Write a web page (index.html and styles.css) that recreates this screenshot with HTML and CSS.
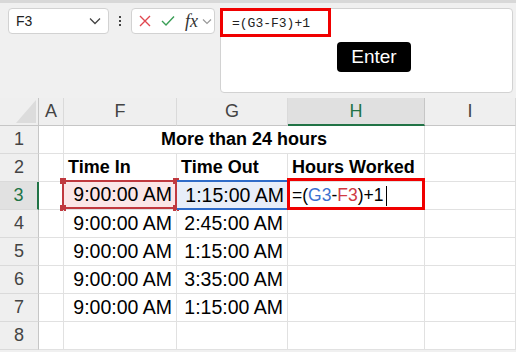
FILE: index.html
```html
<!DOCTYPE html>
<html lang="en">
<head>
  <meta charset="UTF-8" />
  <title>Hours Worked</title>
  <link rel="stylesheet" href="styles.css">
</head>
<body>
  <div class="toolbar">
    <div class="namebox">
      <span>F3</span>
      <svg width="12" height="8" viewBox="0 0 12 8"><path d="M1 1.5 L6 6.5 L11 1.5" fill="none" stroke="#444" stroke-width="1.3"/></svg>
    </div>
    <div class="dots"><i></i><i></i><i></i></div>
    <div class="buttons">
      <svg class="btn-x" width="12" height="12" viewBox="0 0 12 12"><path d="M1 1 L11 11 M11 1 L1 11" stroke="#e0474f" stroke-width="1.4"/></svg>
      <svg class="btn-ok" width="14" height="12" viewBox="0 0 14 12"><path d="M1 6 L5 10 L13 1.5" fill="none" stroke="#3a9e56" stroke-width="1.4"/></svg>
      <span class="fx">fx</span>
      <svg width="10" height="7" viewBox="0 0 10 7"><path d="M1 1.5 L5 5.5 L9 1.5" fill="none" stroke="#999" stroke-width="1.2"/></svg>
    </div>
    <div class="formulabar">
      <div class="formula">=(G3-F3)+1</div>
      <div class="enter">Enter</div>
    </div>
  </div>

  <div class="sheet">
    <div class="hd corner"><div class="tri"></div></div>
    <div class="hd">A</div>
    <div class="hd">F</div>
    <div class="hd">G</div>
    <div class="hd active">H</div>
    <div class="hd">I</div>

    <div class="rn">1</div>
    <div class="c"></div>
    <div class="c title">More than 24 hours</div>
    <div class="c"></div>

    <div class="rn">2</div>
    <div class="c"></div>
    <div class="c bold">Time In</div>
    <div class="c bold">Time Out</div>
    <div class="c bold">Hours Worked</div>
    <div class="c"></div>

    <div class="rn cur">3</div>
    <div class="c"></div>
    <div class="c num ref-red">9:00:00 AM<i class="h tl"></i><i class="h tr"></i><i class="h bl"></i><i class="h br"></i></div>
    <div class="c num ref-blue">1:15:00 AM</div>
    <div class="c edit">=(<span class="blue">G3</span>-<span class="red">F3</span>)+1<span class="caret"></span><div class="hl"></div></div>
    <div class="c"></div>

    <div class="rn">4</div>
    <div class="c"></div>
    <div class="c num">9:00:00 AM</div>
    <div class="c num">2:45:00 AM</div>
    <div class="c"></div>
    <div class="c"></div>

    <div class="rn">5</div>
    <div class="c"></div>
    <div class="c num">9:00:00 AM</div>
    <div class="c num">1:15:00 AM</div>
    <div class="c"></div>
    <div class="c"></div>

    <div class="rn">6</div>
    <div class="c"></div>
    <div class="c num">9:00:00 AM</div>
    <div class="c num">3:35:00 AM</div>
    <div class="c"></div>
    <div class="c"></div>

    <div class="rn">7</div>
    <div class="c"></div>
    <div class="c num">9:00:00 AM</div>
    <div class="c num">1:15:00 AM</div>
    <div class="c"></div>
    <div class="c"></div>

    <div class="rn">8</div>
    <div class="c"></div>
    <div class="c"></div>
    <div class="c"></div>
    <div class="c"></div>
    <div class="c"></div>
  </div>
</body>
</html>
```

FILE: styles.css
```css
body {
  margin: 0;
  background-color: #f0f0f0;
  font-family: "Liberation Sans", Arial, sans-serif;
  color: #000;
  overflow: hidden;
}
.toolbar {
  display: flex;
  align-items: flex-start;
  height: 90px;
  padding: 5px 3px 0 8px;
  border-top: 3px solid #d8d8d8;
}
.namebox {
  width: 101px;
  height: 26px;
  box-sizing: border-box;
  background: #fff;
  border: 1px solid #d2d2d2;
  border-radius: 4px;
  display: flex;
  align-items: center;
  justify-content: space-between;
  padding: 0 7px;
  font-size: 14px;
  color: #222;
}
.dots {
  width: 22px;
  height: 26px;
  display: flex;
  flex-direction: column;
  align-items: center;
  justify-content: center;
  gap: 2px;
}
.dots i {
  width: 2px;
  height: 2px;
  background: #444;
}
.buttons {
  width: 84px;
  height: 26px;
  box-sizing: border-box;
  background: #fff;
  border: 1px solid #d2d2d2;
  border-radius: 4px;
  display: flex;
  align-items: center;
  padding-left: 7px;
}
.btn-ok {
  margin-left: 10px;
}
.fx {
  font-family: "Liberation Serif", serif;
  font-style: italic;
  font-size: 18px;
  color: #333;
  margin-left: 10px;
  margin-right: 4px;
}
.formulabar {
  flex: 1;
  height: 85px;
  margin-left: 5px;
  background: #fff;
  border: 1px solid #d2d2d2;
  border-radius: 4px;
  box-sizing: border-box;
}
.formula {
  width: 111px;
  height: 29px;
  box-sizing: border-box;
  border: 3px solid #f00000;
  margin: -1px 0 0 -1px;
  font-family: "Liberation Mono", monospace;
  font-size: 13px;
  padding: 5px 0 0 9px;
  color: #222;
}
.enter {
  width: 74px;
  height: 30px;
  margin: 5px 0 0 116px;
  background: #000;
  color: #fff;
  border-radius: 4px;
  font-size: 19px;
  line-height: 30px;
  text-align: center;
}
.sheet {
  display: grid;
  grid-template-columns: 39px 25px 113px 111px 137px 1fr;
  grid-auto-rows: 28px;
  background: #fff;
}
.hd {
  background: #efefef;
  border-bottom: 1px solid #c6c6c6;
  border-right: 1px solid #dadada;
  display: flex;
  align-items: center;
  justify-content: center;
  font-size: 18px;
  color: #444;
  box-sizing: border-box;
}
.hd.active {
  background: #e0e0e0;
  color: #217346;
  border-bottom: 2px solid #217346;
  border-right-color: #c6c6c6;
}
.corner {
  border-right-color: #c6c6c6;
  position: relative;
}
.tri {
  position: absolute;
  left: 16px;
  top: 2px;
  width: 20px;
  height: 23px;
  background: #dcdcdc;
  clip-path: polygon(100% 0, 100% 100%, 0 100%);
}
.rn {
  grid-column: 1;
  background: #efefef;
  border-right: 1px solid #c6c6c6;
  border-bottom: 1px solid #dadada;
  display: flex;
  align-items: center;
  justify-content: center;
  font-size: 18px;
  color: #444;
  box-sizing: border-box;
}
.rn.cur {
  background: #e1e1e1;
  color: #217346;
  border-right: 2px solid #217346;
}
.c {
  border-right: 1px solid #e1e1e1;
  border-bottom: 1px solid #e1e1e1;
  box-sizing: border-box;
  display: flex;
  align-items: center;
  font-size: 19.5px;
  padding: 0 4px;
  position: relative;
  white-space: nowrap;
}
.title {
  grid-column: 3 / 6;
  justify-content: center;
  font-weight: bold;
  font-size: 18px;
}
.bold {
  font-weight: bold;
  font-size: 18px;
}
.num {
  justify-content: flex-end;
}
.ref-red {
  background: #fbe6e7;
  box-shadow: inset 0 0 0 2px #c0393f;
  margin: -2px -1px 0 -2px;
  padding-right: 5px;
}
.h {
  position: absolute;
  width: 6px;
  height: 6px;
  background: #c0393f;
}
.h.tl { left: -2px; top: -2px; }
.h.tr { right: -2px; top: -2px; }
.h.bl { left: -2px; bottom: -2px; }
.h.br { right: -2px; bottom: -2px; }
.ref-blue {
  background: #e8eef9;
  border-top: 2px solid #2f6bc8;
  border-bottom: 2px solid #2f6bc8;
  margin-top: -2px;
  padding-right: 3px;
}
.edit {
  font-size: 17.5px;
  padding-left: 4px;
}
.blue { color: #3c72d0; }
.red { color: #d03a44; }
.caret {
  display: inline-block;
  width: 1px;
  height: 20px;
  background: #000;
  margin-left: 3px;
}
.hl {
  position: absolute;
  left: -1px;
  top: -4px;
  right: -1px;
  bottom: -1px;
  border: 3px solid #f00000;
}
```
